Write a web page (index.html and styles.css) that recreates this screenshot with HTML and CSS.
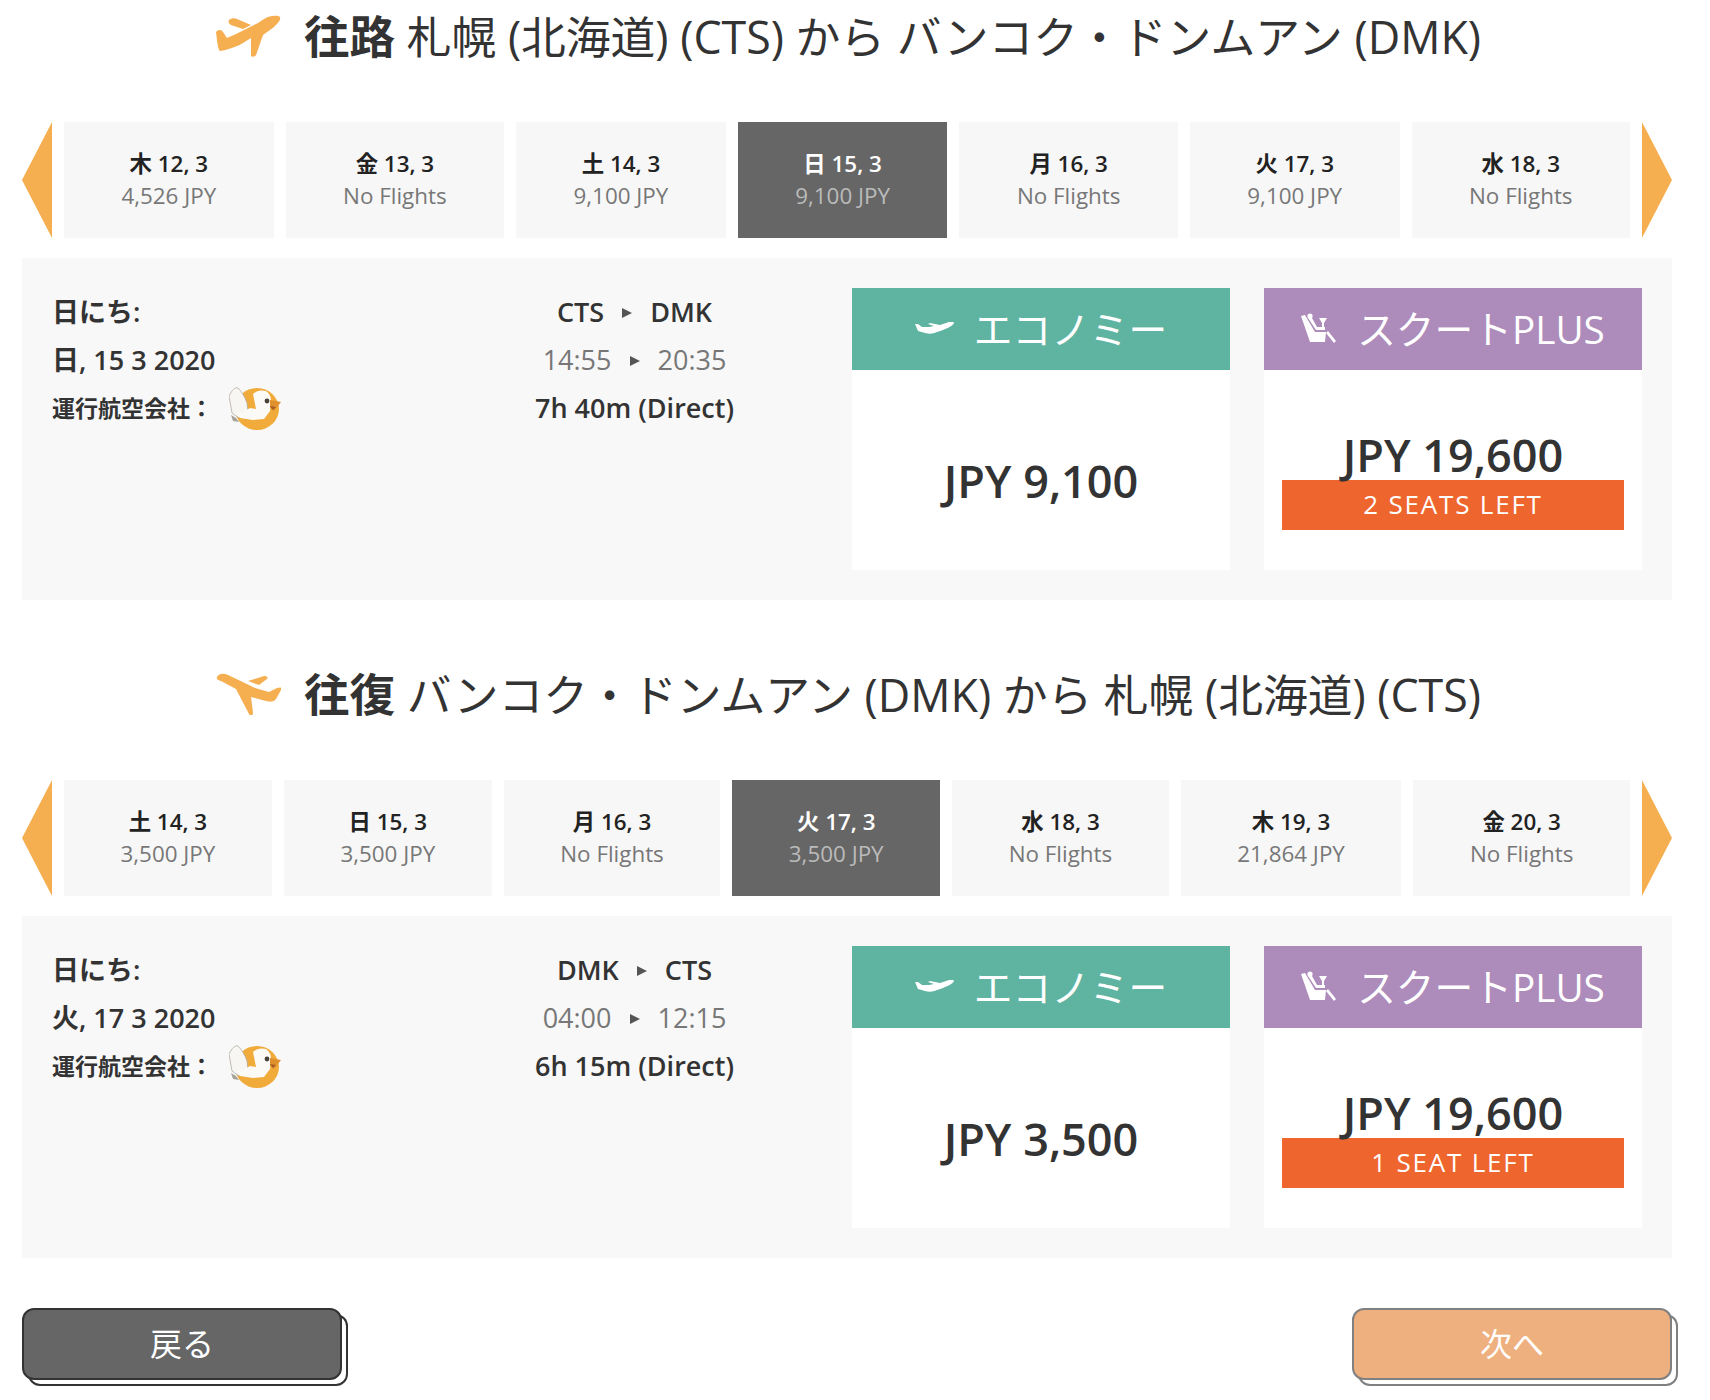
FILE: index.html
```html
<!DOCTYPE html>
<html lang="ja">
<head>
<meta charset="utf-8">
<title>フライト選択</title>
<link rel="stylesheet" href="styles.css">
</head>
<body>
<main class="page">
  <svg class="defs" width="0" height="0" aria-hidden="true">
    <defs>
      <filter id="soft" x="-10%" y="-10%" width="120%" height="120%"><feGaussianBlur stdDeviation="0.6"/></filter>
      <g id="bird" filter="url(#soft)">
        <ellipse cx="28" cy="22" rx="22" ry="21" fill="#f0ab3a"/>
        <path d="M0 9C3 3 6 0 9 1 13 5 16 10 18 16L19 25 10 31 3 26Z" fill="#f8f6f2" stroke="#a8a398" stroke-width=".7"/>
        <path d="M24 7C28 3 33 3 37 4 41 7 42 10 42 14L41 24 35 32 24 33 11 31 7 26 14 25 21 21 27 22Z" fill="#fbfaf6"/>
        <path d="M41 13 52 15 45 24 41 21Z" fill="#e0912e"/>
        <path d="M41 19 47 20 44 23Z" fill="#a65a25"/>
        <circle cx="38" cy="14" r="2.4" fill="#4a4238"/>
        <path d="M2 28 7 31 10 35 4 34Z" fill="#a8a398"/>
      </g>
    </defs>
  </svg>
  <section class="journey">
    <h2 class="title">
      <svg class="title-icon" viewBox="0 0 65 42"><path d="M64 2C65 5 62 8 58 12L47 20 40 40C39 42 36 42 35 41L35 23 27 28C22 31 12 35 4 36 2 35 1 25 0 17 3 14 6 15 7 17L11 23 20 19 42 8 48 4C54 0 62 0 64 2ZM13 5C15 3 19 3 21 4L35 10 27 14 15 10C13 9 12 7 13 5Z"/></svg>
      <span class="title-text"><b>往路</b> 札幌 (北海道) (CTS) から バンコク・ドンムアン (DMK)</span>
    </h2>
    <div class="dates">
      <div class="arrow arrow-left"></div>
      <div class="tab"><strong>木 12, 3</strong><span>4,526 JPY</span></div>
      <div class="tab"><strong>金 13, 3</strong><span>No Flights</span></div>
      <div class="tab"><strong>土 14, 3</strong><span>9,100 JPY</span></div>
      <div class="tab active"><strong>日 15, 3</strong><span>9,100 JPY</span></div>
      <div class="tab"><strong>月 16, 3</strong><span>No Flights</span></div>
      <div class="tab"><strong>火 17, 3</strong><span>9,100 JPY</span></div>
      <div class="tab"><strong>水 18, 3</strong><span>No Flights</span></div>
      <div class="arrow arrow-right"></div>
    </div>
    <div class="panel">
      <div class="when">
        <div class="row strong">日にち:</div>
        <div class="row strong">日, 15 3 2020</div>
        <div class="row carrier">運行航空会社：
          <svg class="logo" viewBox="0 0 52 43"><use href="#bird"/></svg>
        </div>
      </div>
      <div class="route">
        <div class="row semibold">CTS<i class="tri"></i>DMK</div>
        <div class="row muted">14:55<i class="tri"></i>20:35</div>
        <div class="row semibold">7h 40m (Direct)</div>
      </div>
      <div class="fare">
        <div class="fare-head green">
          <svg class="eco-icon" viewBox="0 0 39 12"><path d="M39 1C38 4 29 8 22 10 18 12 14 12 10 11L3 9 0 2 3 2 7 5 14 5 19 4 13 2 15 1 25 3 34 0C37-1 39 0 39 1Z"/></svg>
          <span>エコノミー</span>
        </div>
        <div class="fare-body"><div class="price">JPY 9,100</div></div>
      </div>
      <div class="fare">
        <div class="fare-head purple">
          <svg class="seat-icon" viewBox="0 0 36 32"><circle cx="9" cy="4" r="2.6"/><path d="M0 4 4 3 14 20H25L24 30H9Z"/><path d="M7 6 11 6 16 15H24V18H15Z"/><path d="M18 6H26L23 11V16H21V11Z"/><path d="M27 19 35 29 33 31 25 21Z"/></svg>
          <span>スクートPLUS</span>
        </div>
        <div class="fare-body seats"><div class="price">JPY 19,600</div><div class="left">2 SEATS LEFT</div></div>
      </div>
    </div>
  </section>

  <section class="journey">
    <h2 class="title">
      <svg class="title-icon" viewBox="0 0 65 42"><path d="M1 4C3 0 8 0 12 2L33 12 39 15 53 19 61 15C64 14 66 14 65 17L60 26C58 29 54 29 50 28L35 24 37 40C37 43 34 43 33 41L20 16 5 8C2 7 0 6 1 4ZM32 8 48 3C50 3 53 4 51 6L43 12Z"/></svg>
      <span class="title-text"><b>往復</b> バンコク・ドンムアン (DMK) から 札幌 (北海道) (CTS)</span>
    </h2>
    <div class="dates">
      <div class="arrow arrow-left"></div>
      <div class="tab"><strong>土 14, 3</strong><span>3,500 JPY</span></div>
      <div class="tab"><strong>日 15, 3</strong><span>3,500 JPY</span></div>
      <div class="tab"><strong>月 16, 3</strong><span>No Flights</span></div>
      <div class="tab active"><strong>火 17, 3</strong><span>3,500 JPY</span></div>
      <div class="tab"><strong>水 18, 3</strong><span>No Flights</span></div>
      <div class="tab"><strong>木 19, 3</strong><span>21,864 JPY</span></div>
      <div class="tab"><strong>金 20, 3</strong><span>No Flights</span></div>
      <div class="arrow arrow-right"></div>
    </div>
    <div class="panel">
      <div class="when">
        <div class="row strong">日にち:</div>
        <div class="row strong">火, 17 3 2020</div>
        <div class="row carrier">運行航空会社：
          <svg class="logo" viewBox="0 0 52 43"><use href="#bird"/></svg>
        </div>
      </div>
      <div class="route">
        <div class="row semibold">DMK<i class="tri"></i>CTS</div>
        <div class="row muted">04:00<i class="tri"></i>12:15</div>
        <div class="row semibold">6h 15m (Direct)</div>
      </div>
      <div class="fare">
        <div class="fare-head green">
          <svg class="eco-icon" viewBox="0 0 39 12"><path d="M39 1C38 4 29 8 22 10 18 12 14 12 10 11L3 9 0 2 3 2 7 5 14 5 19 4 13 2 15 1 25 3 34 0C37-1 39 0 39 1Z"/></svg>
          <span>エコノミー</span>
        </div>
        <div class="fare-body"><div class="price">JPY 3,500</div></div>
      </div>
      <div class="fare">
        <div class="fare-head purple">
          <svg class="seat-icon" viewBox="0 0 36 32"><circle cx="9" cy="4" r="2.6"/><path d="M0 4 4 3 14 20H25L24 30H9Z"/><path d="M7 6 11 6 16 15H24V18H15Z"/><path d="M18 6H26L23 11V16H21V11Z"/><path d="M27 19 35 29 33 31 25 21Z"/></svg>
          <span>スクートPLUS</span>
        </div>
        <div class="fare-body seats"><div class="price">JPY 19,600</div><div class="left">1 SEAT LEFT</div></div>
      </div>
    </div>
  </section>

  <nav class="actions">
    <button class="btn back" type="button">戻る</button>
    <button class="btn next" type="button">次へ</button>
  </nav>
</main>
</body>
</html>
```
FILE: styles.css
```css
* { box-sizing: border-box; }
html, body { margin: 0; padding: 0; background: #fff; }
body {
  font-family: "Open Sans", "Noto Sans CJK JP", sans-serif;
  color: #333;
}
.page { width: 1710px; height: 1400px; padding: 0 38px 0 22px; }
.defs { position: absolute; }
.journey { height: 658px; }

.title {
  height: 72px;
  margin: 0 0 50px;
  padding-left: 3px;
  display: flex;
  align-items: center;
  justify-content: center;
  gap: 23px;
  font-size: 44.75px;
  font-weight: 400;
  line-height: 70px;
  white-space: nowrap;
}
.title b { font-weight: 700; font-size: 45.6px; }
.title-icon { width: 65px; height: 42px; fill: #f5ae50; flex: none; }

.dates { display: flex; gap: 12px; height: 116px; margin-bottom: 20px; }
.arrow { width: 30px; flex: none; background: #f5ae50; }
.arrow-left { clip-path: polygon(100% 0, 100% 100%, 0 50%); }
.arrow-right { clip-path: polygon(0 0, 100% 50%, 0 100%); }
.tab {
  flex: 1 1 auto;
  background: #f7f7f7;
  display: flex;
  flex-direction: column;
  align-items: center;
  justify-content: center;
  font-size: 22.4px;
  line-height: 32px;
  color: #777;
}
.tab strong { font-weight: 600; color: #222; }
.tab.active { background: #666; color: #bbb; }
.tab.active strong { color: #fff; }

.panel {
  height: 342px;
  padding: 30px;
  background: #f8f8f8;
  display: flex;
  gap: 34px;
}
.row { height: 48px; line-height: 48px; font-size: 27px; }
.when { width: 370px; flex: none; }
.route { flex: 1 1 auto; text-align: center; padding-right: 5px; }
.strong { font-weight: 600; }
.semibold { font-weight: 600; color: #333; }
.muted { color: #777; font-weight: 400; }
.carrier {
  display: flex;
  align-items: center;
  font-size: 23px;
  font-weight: 700;
  gap: 16px;
}
.logo { width: 52px; height: 43px; flex: none; }
.tri {
  display: inline-block;
  width: 0;
  height: 0;
  margin: 0 18px 4px;
  vertical-align: middle;
  border-left: 10px solid #555;
  border-top: 5px solid transparent;
  border-bottom: 5px solid transparent;
}

.fare { width: 378px; flex: none; background: #fff; display: flex; flex-direction: column; }
.fare-head {
  height: 82px;
  display: flex;
  align-items: center;
  justify-content: center;
  gap: 20px;
  padding-bottom: 2px;
  color: #fff;
  font-size: 38.7px;
  flex: none;
}
.fare-head span { padding-bottom: 3px; }
.green { background: #5fb3a1; }
.purple { background: #ad8bbb; }
.eco-icon { width: 39px; height: 12px; fill: #fff; flex: none; }
.seat-icon { width: 36px; height: 32px; fill: #fff; flex: none; }
.fare-body { padding-top: 88px; text-align: center; }
.price { font-size: 45px; font-weight: 600; line-height: 46px; color: #333; }
.seats { padding-top: 62px; }
.seats .price { margin-bottom: 2px; }
.left {
  margin: 0 18px;
  height: 50px;
  line-height: 48px;
  background: #ee652d;
  color: #fff;
  font-size: 26px;
  letter-spacing: 1.8px;
}

.actions { display: flex; justify-content: space-between; margin-top: -8px; }
.btn {
  width: 320px;
  height: 72px;
  border-radius: 12px;
  font-family: inherit;
  font-size: 32px;
  color: #fff;
  padding: 0 0 4px;
}
.back { background: #666; border: 2px solid #333; box-shadow: 6px 6px 0 -2px #fff, 6px 6px 0 0 #333; }
.next { background: #efb07f; border: 2px solid #808080; box-shadow: 6px 6px 0 -2px #fff, 6px 6px 0 0 #808080; }
```
